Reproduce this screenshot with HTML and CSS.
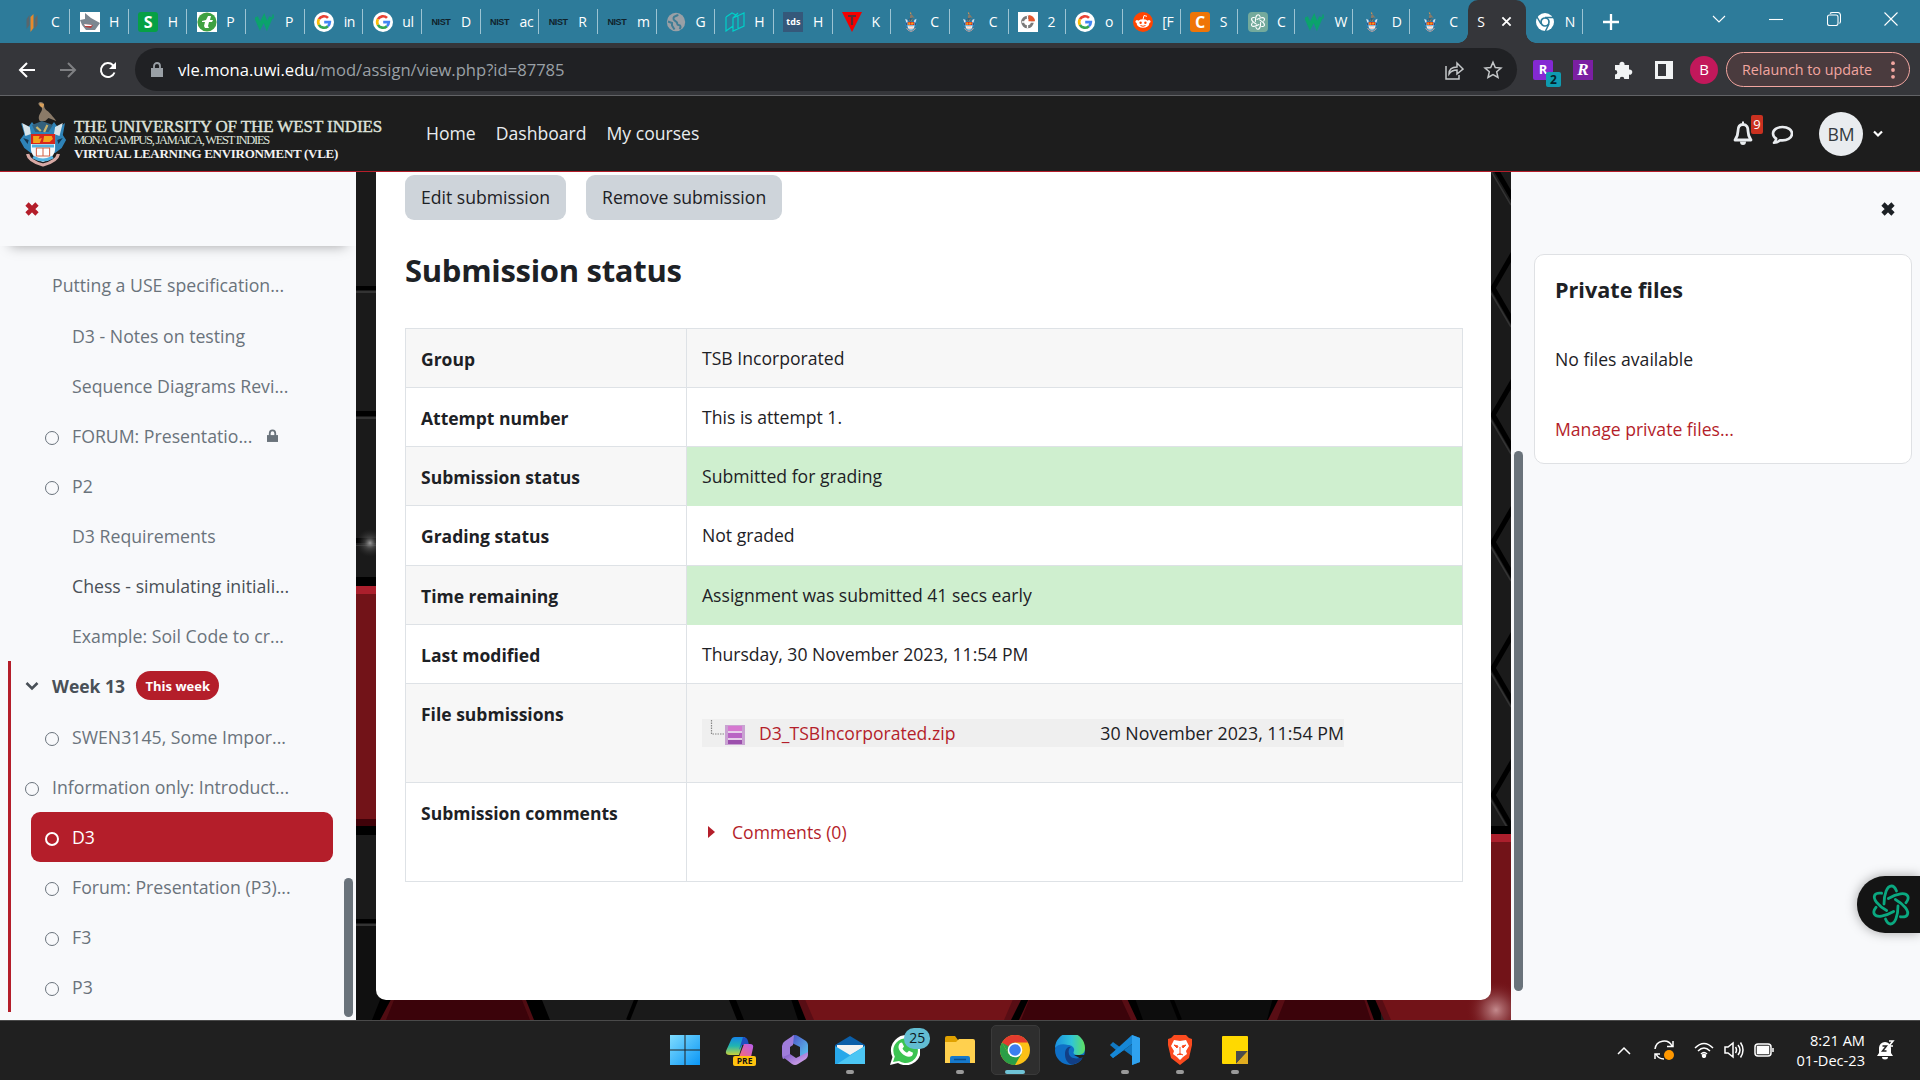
FILE: index.html
```html
<!DOCTYPE html>
<html lang="en">
<head>
<meta charset="utf-8">
<title>D3: Submission status</title>
<link rel="stylesheet" href="styles.css">
</head>
<body>
<svg class="defs" aria-hidden="true">
  <symbol id="google" viewBox="0 0 20 20"><circle cx="10" cy="10" r="10" fill="#fff"/><g fill="none" stroke-width="2.7"><path d="M14 5.9A5.8 5.8 0 0 0 4.9 7.2" stroke="#ea4335"/><path d="M4.9 7.2a5.8 5.8 0 0 0 0 5.6" stroke="#fbbc05"/><path d="M4.9 12.8a5.8 5.8 0 0 0 9 1.4" stroke="#34a853"/><path d="M13.9 14.2A5.8 5.8 0 0 0 15.8 10.2H10.2" stroke="#4285f4"/></g></symbol>
  <symbol id="crest" viewBox="0 0 44 66"><path d="M19 20c-3-6 3-9 2-13-1-3-4-3-3-5s5-1 5 2c0 5 3 5 6 9 2 3 5 6 5 7l-7-3-3 3z" fill="#8a7a68"/><path d="M19 2l4 1-1 4-3-2z" fill="#d9a05a"/><path d="M2 22l6 5 4-6 4 6 6-4 6 4 4-6 4 6 6-5-2 12 3 5-4 8-6 5H11l-6-5-4-8 4-6z" fill="#2e83b8"/><path d="M3 22l7 4 1 7-5 2zM40 22l-7 4-1 7 5 2z" fill="#d7e4ea"/><path d="M4 37l5 2-1 4zM40 37l-5 2 1 4z" fill="#16364f"/><path d="M12 24l9-4 10 4-4 7H15z" fill="#34617c"/><path d="M16 26l4 4M26 24l-3 7" stroke="#c8b36c" stroke-width="2"/><path d="M11 33h22v15c0 6-5 11-11 13-6-2-11-7-11-13z" fill="#f4f8fa"/><path d="M11 33h22v10H11z" fill="#d8261c"/><path d="M13 35h6l-1 3 3-1-2 5h-6zM23 35h7l1 3-3 3h-6z" fill="#f4a51c"/><path d="M12 45h20M13 56q9 6 18 0" stroke="#53b1df" stroke-width="3" fill="none"/><path d="M16 47h12v8H16z" fill="#fff" stroke="#d66a4e"/><path d="M22 47v8" stroke="#d66a4e"/><path d="M8 53c1 6 7 9 14 11 7-2 13-5 14-11" fill="none" stroke="#d8a9a4" stroke-width="3"/></symbol>
  <symbol id="wmark" viewBox="0 0 20 20"><path d="M1 5l4 9 4-8 3 8 4-9" fill="none" stroke="#0ba36c" stroke-width="4"/><path d="M18 2.500v4" stroke="#0ba36c" stroke-width="1.6"/></symbol>
  <symbol id="knot" viewBox="0 0 40 42"><g fill="none" stroke="currentColor" stroke-width="2.8" stroke-linecap="round"><path d="M13 20C13 10 16 2 20.5 2c2 0 3.8 2 5 5"/><path d="M13 20C13 10 16 2 20.5 2c2 0 3.8 2 5 5" transform="rotate(60 20 21)"/><path d="M13 20C13 10 16 2 20.5 2c2 0 3.8 2 5 5" transform="rotate(120 20 21)"/><path d="M13 20C13 10 16 2 20.5 2c2 0 3.8 2 5 5" transform="rotate(180 20 21)"/><path d="M13 20C13 10 16 2 20.5 2c2 0 3.8 2 5 5" transform="rotate(240 20 21)"/><path d="M13 20C13 10 16 2 20.5 2c2 0 3.8 2 5 5" transform="rotate(300 20 21)"/></g></symbol>
  <symbol id="cross" viewBox="0 0 14 14"><path d="M2 2l10 10M12 2L2 12" stroke="currentColor" stroke-width="4.6"/></symbol>
</svg>

<div class="tabs">
  <div class="tab first"><svg class="fav" viewBox="0 0 20 20"><path d="M4.500 7l3-4v10l-3 4z" fill="#59666c"/><path d="M8.500 5l3-3v14l-3 4z" fill="#e8892b"/><path d="M12.500 7l3-4v10l-3 4z" fill="#6b6660"/></svg><span>C</span></div>
  <div class="tab"><svg class="fav" viewBox="0 0 20 20"><path d="M0 0h20v20H0z" fill="#fff"/><path d="M0 8l5-1 0-6 6 5 9 5-5 7-9 0-4-5z" fill="#7c8791"/><path d="M4 12l9 1-2 3-6-1z" fill="#b8413f"/><path d="M4 12l8 1-1 1-6 0z" fill="#fff"/></svg><span>H</span></div>
  <div class="tab"><i class="fav sq green">S</i><span>H</span></div>
  <div class="tab"><svg class="fav" viewBox="0 0 20 20"><path d="M0 0h20v20H0z" fill="#fff"/><circle cx="10" cy="10" r="9.6" fill="#3fa142"/><path d="M5 9l4-1 2-4h3l-1 4h3l-1 2h-3l-1 4 1 2h-4l-1-2 1-4H5z" fill="#fff"/></svg><span>P</span></div>
  <div class="tab"><svg class="fav"><use href="#wmark"/></svg><span>P</span></div>
  <div class="tab"><svg class="fav"><use href="#google"/></svg><span>in</span></div>
  <div class="tab"><svg class="fav"><use href="#google"/></svg><span>ul</span></div>
  <div class="tab"><i class="fav nist">NIST</i><span>D</span></div>
  <div class="tab"><i class="fav nist">NIST</i><span>ac</span></div>
  <div class="tab"><i class="fav nist">NIST</i><span>R</span></div>
  <div class="tab"><i class="fav nist">NIST</i><span>m</span></div>
  <div class="tab"><svg class="fav" viewBox="0 0 20 20"><circle cx="10" cy="10" r="9.2" fill="#9aa0a6"/><path d="M12 2.500c-1 2-4 1-4.500 3.500S9 8.500 10.500 10s0 3 2 3 3 2 1 4M2 9.500l4 1.500v2.500l2.500 4" fill="none" stroke="#3f7c94" stroke-width="2"/></svg><span>G</span></div>
  <div class="tab"><svg class="fav" viewBox="0 0 20 20" fill="none" stroke="#00cfc8" stroke-width="1.2"><path d="M1 5l6-4 4 2M1 5v14l7-5M8 6l11-5v13L8 19zM8 6l5-5M13 3v14"/></svg><span>H</span></div>
  <div class="tab"><i class="fav tds">tds</i><span>H</span></div>
  <div class="tab"><svg class="fav" viewBox="0 0 20 20"><path d="M0 0h20L10 20z" fill="#f40000"/><path d="M6 4h8M10 4v9" stroke="#5c2a33" stroke-width="2.2"/></svg><span>K</span></div>
  <div class="tab"><svg class="fav"><use href="#crest"/></svg><span>C</span></div>
  <div class="tab"><svg class="fav"><use href="#crest"/></svg><span>C</span></div>
  <div class="tab slim"><svg class="fav" viewBox="0 0 20 20"><path d="M0 0h20v20H0z" fill="#fff"/><circle cx="9.500" cy="10" r="4.800" fill="none" stroke="#7a7a7a" stroke-width="3"/><path d="M9.500 4v12M4 10h12" stroke="#fff" stroke-width="1.300"/><path d="M10.500 3A6.500 6.500 0 0 1 17 9.200h-6.500z" fill="#e4572e"/></svg><span>2</span></div>
  <div class="tab slim"><svg class="fav"><use href="#google"/></svg><span>o</span></div>
  <div class="tab slim"><svg class="fav" viewBox="0 0 20 20"><circle cx="10" cy="10" r="10" fill="#ff4500"/><ellipse cx="10" cy="11.500" rx="6.300" ry="4.300" fill="#fff"/><circle cx="4" cy="9.500" r="1.500" fill="#fff"/><circle cx="16" cy="9.500" r="1.500" fill="#fff"/><circle cx="7.600" cy="10.800" r="1.200" fill="#ff4500"/><circle cx="12.400" cy="10.800" r="1.200" fill="#ff4500"/><path d="M7.500 13.500q2.500 1.600 5 0" stroke="#ff4500" fill="none"/><path d="M10 7.500l1-4 3 .8" stroke="#fff" fill="none"/></svg><span>[F</span></div>
  <div class="tab slim"><i class="fav sq orange">C</i><span>S</span></div>
  <div class="tab slim"><svg class="fav gpt"><use href="#knot"/></svg><span>C</span></div>
  <div class="tab slim"><svg class="fav"><use href="#wmark"/></svg><span>W</span></div>
  <div class="tab slim"><svg class="fav"><use href="#crest"/></svg><span>D</span></div>
  <div class="tab slim last"><svg class="fav"><use href="#crest"/></svg><span>C</span></div>
  <div class="tab active"><span>S</span><svg class="tabx" viewBox="0 0 12 12"><path d="M1.500 1.500l9 9M10.500 1.500l-9 9" stroke="#fff" stroke-width="2"/></svg></div>
  <div class="tab slim"><svg class="fav" viewBox="0 0 20 20"><circle cx="10" cy="10" r="9" fill="#fff"/><circle cx="10" cy="10" r="4" fill="#fff" stroke="#2d7b9a" stroke-width="1.700"/><path d="M10 5.500h9M6 12L2 5M14 12l-4 8" stroke="#2d7b9a" stroke-width="1.500"/></svg><span>N</span></div>
  <svg class="plus" viewBox="0 0 16 16"><path d="M8 0v16M0 8h16" stroke="#fff" stroke-width="2.300"/></svg>
  <div class="winctl">
    <svg viewBox="0 0 14 14"><path d="M1 4l6 6 6-6"/></svg>
    <svg viewBox="0 0 14 14"><path d="M0 7.500h14"/></svg>
    <svg viewBox="0 0 14 14"><rect x=".5" y="3" width="10.500" height="10.500" rx="2"/><path d="M3 1.500q1-1 3-1h4.500q3 0 3 3V9q0 2-1 2.500"/></svg>
    <svg viewBox="0 0 14 14"><path d="M.5 .5l13 13M13.500 .5l-13 13"/></svg>
  </div>
</div>

<div class="toolbar">
  <svg class="nav" viewBox="0 0 18 18"><path d="M17 9H2M9 2L2 9l7 7" stroke="#fff"/></svg>
  <svg class="nav" viewBox="0 0 18 18"><path d="M1 9h15M9 2l7 7-7 7" stroke="#7f8083"/></svg>
  <svg class="nav" viewBox="0 0 18 18"><path d="M15.500 11.500A7 7 0 1 1 14 4.200l1.500 1.600" stroke="#fff"/><path d="M17 1v7h-7z" fill="#fff" stroke="none"/></svg>
  <div class="omni">
    <svg class="lock" viewBox="0 0 12 16"><path d="M0 6h12v9H0z" fill="#9aa0a6"/><path d="M3 7V4a3 3 0 0 1 6 0v3" fill="none" stroke="#9aa0a6" stroke-width="1.800"/></svg>
    <div class="url"><b>vle.mona.uwi.edu</b>/mod/assign/view.php?id=87785</div>
    <svg class="oi" viewBox="0 0 20 20"><path d="M2 6v13h13v-4M5 14c0-5 3-7 8-7V3l6 6-6 5v-4c-4 0-6 1-8 4z"/></svg>
    <svg class="oi" viewBox="0 0 20 20"><path d="M10 2.200l2.300 5.300 5.700.5-4.300 3.800 1.300 5.700-5-3-5 3 1.300-5.700L2 8l5.700-.5z"/></svg>
  </div>
  <div class="exts">
    <div class="ext purple">R<i class="two">2</i></div>
    <div class="ext script">R</div>
    <svg class="puz" viewBox="0 0 20 20"><path d="M2 5h4.500a2.600 2.600 0 1 1 5 0H16v4.600a2.600 2.600 0 1 1 0 5V19h-4.700a2.300 2.300 0 0 0-4.600 0H2v-4.500a2.300 2.300 0 0 0 0-4.600z" fill="#f1f3f4"/></svg>
    <i class="side"></i>
    <i class="prof">B</i>
  </div>
  <div class="relaunch"><span>Relaunch to update</span><svg viewBox="0 0 4 18"><circle cx="2" cy="2.200" r="1.900"/><circle cx="2" cy="9" r="1.900"/><circle cx="2" cy="15.800" r="1.900"/></svg></div>
</div>

<header class="site">
  <svg class="logo"><use href="#crest"/></svg>
  <div class="brand"><div class="l1">THE UNIVERSITY OF THE WEST INDIES</div><div class="l2">MONA CAMPUS, JAMAICA, WEST INDIES</div><div class="l3">VIRTUAL LEARNING ENVIRONMENT (VLE)</div></div>
  <nav><a>Home</a><a>Dashboard</a><a>My courses</a></nav>
  <div class="user">
    <div class="bell"><svg viewBox="0 0 20 24"><path d="M10 3c-4 0-5 3-5 6.500C5 14 3.500 16 2 18.500h16C16.500 16 15 14 15 9.500 15 6 14 3 10 3z" fill="none" stroke="#e9ecef" stroke-width="2.800" stroke-linejoin="round"/><path d="M7 20h6a3 3.500 0 0 1-6 0zM9 0h2v3H9z" fill="#e9ecef"/></svg><i>9</i></div>
    <svg class="chat" viewBox="0 0 22 20"><path d="M11.500 2C6 2 2 4.800 2 8.500c0 2.200 1.300 4 3.200 5.200C5 15.500 4 16.800 3 17.800c2.500 0 4.500-1 6-2.600C16 16 21 13 21 8.500 21 4.800 17 2 11.500 2z" fill="none" stroke="#e9ecef" stroke-width="2.600" stroke-linejoin="round"/></svg>
    <i class="ava">BM</i>
    <svg class="chev" viewBox="0 0 10 8"><path d="M1 1.500l4 4 4-4" fill="none" stroke="#fff" stroke-width="2.200"/></svg>
  </div>
</header>

<div class="body">
  <aside class="left">
    <div class="dhead"><svg><use href="#cross"/></svg></div>
    <div class="idx">
      <div class="it gap"><i class="no"></i>Putting a USE specification...</div>
      <div class="it sub"><i class="no"></i>D3 - Notes on testing</div>
      <div class="it sub"><i class="no"></i>Sequence Diagrams Revi...</div>
      <div class="it sub"><i></i>FORUM: Presentatio...<svg class="lk" viewBox="0 0 12 16"><path d="M0 7h12v7.500H0z"/><path d="M3 8V5a3 3.200 0 0 1 6 0v3" fill="none" stroke="#6a737b" stroke-width="2"/></svg></div>
      <div class="it sub"><i></i>P2</div>
      <div class="it sub"><i class="no"></i>D3 Requirements</div>
      <div class="it sub dark"><i class="no"></i>Chess - simulating initiali...</div>
      <div class="it sub"><i class="no"></i>Example: Soil Code to cr...</div>
      <div class="cur">
        <div class="it week gap"><svg viewBox="0 0 14 10"><path d="M1.500 2l5.500 5.500L12.500 2" fill="none" stroke="#495057" stroke-width="2.600"/></svg>Week 13<em>This week</em></div>
        <div class="it sub"><i></i>SWEN3145, Some Impor...</div>
        <div class="it"><i></i>Information only: Introduct...</div>
        <div class="it sub on"><i></i>D3</div>
        <div class="it sub"><i></i>Forum: Presentation (P3)...</div>
        <div class="it sub"><i></i>F3</div>
        <div class="it sub"><i></i>P3</div>
      </div>
    </div>
    <div class="sb sbl"></div>
  </aside>

  <main>
    <svg class="wall" viewBox="356 172 1155 848">
      <defs>
        <radialGradient id="g1"><stop offset="0" stop-color="#999"/><stop offset=".4" stop-color="#666" stop-opacity=".5"/><stop offset="1" stop-color="#333" stop-opacity="0"/></radialGradient>
        <radialGradient id="g2"><stop offset="0" stop-color="#c48a8d"/><stop offset=".4" stop-color="#a05a5e" stop-opacity=".7"/><stop offset="1" stop-color="#721318" stop-opacity="0"/></radialGradient>
      </defs>
      <path d="M356 172h1155v848H356z" fill="#1a1a1a"/>
      <path d="M356 286h20v4h-20zM356 411h20v5h-20zM356 538h20v5h-20zM356 577h20v9h-20zM356 826h20v9h-20zM356 919h20v4h-20z" fill="#000"/>
      <path d="M356 291h20v2h-20zM356 417h20v2h-20zM356 545h20v1h-20zM356 924h20v2h-20z" fill="#333"/>
      <path d="M356 586h20v8h-20z" fill="#ab1f2c"/><path d="M356 594h20v225h-20z" fill="#721318"/><path d="M356 819h20v7h-20z" fill="#400209"/>
      <circle cx="370" cy="543" r="14" fill="url(#g1)"/>
      <g fill="none" stroke="#000" stroke-width="5"><path d="M1495 168l20 34M1515 250l-22 38 22 38M1515 377l-22 38 22 38M1515 504l-22 38 22 38M1515 630l-22 38 22 38M1515 757l-22 38 22 38"/></g>
      <g fill="none" stroke="#333" stroke-width="1.500"><path d="M1491 171l20 34M1491 293l20 34M1491 420l20 34M1491 547l20 34M1491 673l20 34M1491 800l20 34"/></g>
      <path d="M1491 826h20v8h-20z" fill="#000"/><path d="M1491 834h20v8h-20z" fill="#ab1f2c"/><path d="M1491 842h20v178h-20z" fill="#721318"/>
      <path d="M356 990h1025v30H356z" fill="#000"/>
      <path d="M356 926h20v64h8l-12 30h-16z" fill="#101010"/>
      <path d="M396 990h126l12 30H380z" fill="#500c12"/><path d="M398 990h120l12 30H386z" fill="#3b030a"/>
      <path d="M538 990h187l12 30H550z" fill="#1a1a1a"/><path d="M640 990l-12 30" stroke="#000" stroke-width="4"/>
      <path d="M732 990h56l10 30H744z" fill="#111"/>
      <path d="M794 990h232l-15 30H806z" fill="#580d14"/><path d="M801 990h216l-13 30H814z" fill="#721318"/>
      <path d="M1033 990h90l14 30H1019z" fill="#580d14"/><path d="M1033 990h84l14 30H1021z" fill="#3b030a"/>
      <path d="M1132 990h143l-8 30H1143z" fill="#0d0d0d"/><path d="M1168 990l12 30" stroke="#000" stroke-width="4"/>
      <path d="M1283 990h80l11 30H1268z" fill="#580d14"/><path d="M1289 990h72l10 30h-94z" fill="#3b030a"/>
      <path d="M1371 990h120v30h-107z" fill="#580d14"/><path d="M1378 990h113v30h-100z" fill="#721318"/>
      <circle cx="1496" cy="1010" r="30" fill="url(#g2)"/>
    </svg>
    <div class="card">
      <div class="btns"><a>Edit submission</a><a>Remove submission</a></div>
      <h3>Submission status</h3>
      <div class="tbl">
        <div class="tr"><b>Group</b><div>TSB Incorporated</div></div>
        <div class="tr"><b>Attempt number</b><div>This is attempt 1.</div></div>
        <div class="tr ok"><b>Submission status</b><div>Submitted for grading</div></div>
        <div class="tr t60"><b>Grading status</b><div>Not graded</div></div>
        <div class="tr ok"><b>Time remaining</b><div>Assignment was submitted 41 secs early</div></div>
        <div class="tr"><b>Last modified</b><div>Thursday, 30 November 2023, 11:54 PM</div></div>
        <div class="tr tall"><b>File submissions</b><div class="fcell"><div class="file">
          <svg viewBox="0 0 38 28"><path d="M9.500 1v14H23" fill="none" stroke="#888" stroke-width="1.200" stroke-dasharray="1.500 1"/></svg>
          <i class="zip"></i><a>D3_TSBIncorporated.zip</a><span>30 November 2023, 11:54 PM</span></div></div></div>
        <div class="tr tall"><b>Submission comments</b><div class="ccell"><svg viewBox="0 0 7 12"><path d="M0 0l7 6-7 6z" fill="#b41e2a"/></svg><a>Comments (0)</a></div></div>
      </div>
    </div>
  </main>

  <aside class="right">
    <div class="rhead"><svg><use href="#cross"/></svg></div>
    <section><h5>Private files</h5><p>No files available</p><a>Manage private files...</a></section>
    <div class="sb sbr"></div>
    <div class="float"><svg><use href="#knot"/></svg></div>
  </aside>
</div>

<footer class="task">
  <div class="apps">
    <div class="app"><svg viewBox="0 0 30 30"><defs><linearGradient id="w" x1="0" y1="0" x2="1" y2="1"><stop offset="0" stop-color="#7fdcff"/><stop offset="1" stop-color="#0a96f5"/></linearGradient></defs><path d="M0 0h14.500v14.500H0zM15.500 0H30v14.500H15.500zM0 15.500h14.500V30H0zM15.500 15.500H30V30H15.500z" fill="url(#w)"/></svg></div>
    <div class="app"><svg viewBox="0 0 30 30"><defs><linearGradient id="c1" x1="0" y1="0" x2="0" y2="1"><stop offset="0" stop-color="#1684e8"/><stop offset=".5" stop-color="#20b5b0"/><stop offset="1" stop-color="#c9d23a"/></linearGradient><linearGradient id="c2" x1="1" y1="0" x2="0" y2="1"><stop offset="0" stop-color="#b65cf0"/><stop offset="1" stop-color="#fa6b73"/></linearGradient></defs><path d="M6 5q1-3 4-3h10l-6 18H5q-5 0-4-4z" fill="url(#c1)"/><path d="M18 2q4 0 5 4l1 4h-7l-3 5z" fill="#1d4fc0"/><path d="M19 9h6q4 0 3 4l-2 9H14z" fill="url(#c2)"/></svg><i class="pre">PRE</i></div>
    <div class="app"><svg viewBox="0 0 30 30"><defs><linearGradient id="o1" x1="0" y1="0" x2="1" y2="1"><stop offset="0" stop-color="#4c54c8"/><stop offset="1" stop-color="#5cc8f0"/></linearGradient><linearGradient id="o2" x1="0" y1="0" x2="1" y2="1"><stop offset="0" stop-color="#7253c7"/><stop offset="1" stop-color="#e3b1ee"/></linearGradient></defs><path d="M12 1q3-2 6 0l8 5q2 2 2 4v9l-8 3V12l-8-4z" fill="url(#o1)"/><path d="M14 0l-1 10-3 2v9l-7 3q-1-2-1-4v-9q0-3 3-5z" fill="#9f7cdb"/><path d="M3 22l7-3 6 4 12-6v3q0 2-2 4l-8 5q-3 2-6 0z" fill="url(#o2)"/></svg></div>
    <div class="app run"><svg viewBox="0 0 30 30"><path d="M0 10L15 1l15 9v6H0z" fill="#0b5fa9"/><path d="M2 10h26v8L15 22 2 17z" fill="#f2f2f2"/><path d="M0 11l15 9 15-9v18H0z" fill="#28a8ea"/><path d="M30 11L2 29h28z" fill="#4cc6f4"/></svg></div>
    <div class="app"><svg viewBox="0 0 30 30"><path d="M0 30l2.500-8A15 15 0 1 1 8 28z" fill="#fff"/><path d="M3 27l1.800-5.500A12.300 12.300 0 1 1 9 26z" fill="#3cc452"/><path d="M10 8l2-.5 2 4-1.500 2c1 2 2.500 3.500 4.500 4.300l2-2 4 2c0 3-2 4-4 4-5-.5-10-5-10.500-9.500 0-2 .5-3 1.500-4.300z" fill="#fff"/></svg><i class="cnt">25</i></div>
    <div class="app run"><svg viewBox="0 0 30 30"><path d="M0 3q0-2 2-2h8l3 4v6H0z" fill="#e0a100"/><path d="M0 7h11l3-3h14q2 0 2 2v22H0z" fill="#ffd04e"/><path d="M5 28v-5q0-2 2-2h16q2 0 2 2v5z" fill="#1679cc"/><path d="M9 24.500h12" stroke="#0a4d8c" stroke-width="1.500"/></svg></div>
    <div class="app cur2"><svg viewBox="0 0 30 30"><circle cx="15" cy="15" r="15" fill="#fbc116"/><path d="M2 7.500A15 15 0 0 0 15 30l6.500-11.300H8.500z" fill="#2a9e47"/><path d="M2 7.500l6.500 11.200L15 7.500z" fill="#2a9e47"/><path d="M2 7.500A15 15 0 0 1 28 7.500H15a7.500 7.500 0 0 0-6.500 3.700z" fill="#e33b2e"/><circle cx="15" cy="15" r="7.300" fill="#fff"/><circle cx="15" cy="15" r="5.800" fill="#3c7ef0"/></svg></div>
    <div class="app"><svg viewBox="0 0 30 30"><defs><linearGradient id="e1"><stop offset="0" stop-color="#1a8fe0"/><stop offset=".55" stop-color="#30c5d8"/><stop offset="1" stop-color="#5fe060"/></linearGradient></defs><circle cx="15" cy="15" r="15" fill="#0f6fc6"/><path d="M19 20h11v6z" fill="#202020"/><path d="M0 13A15 15 0 0 1 30 13c0 5-3 7-7 7-5 0-5-2-4-4 1-3-2-6-6-6C7 8 2 10 0 13z" fill="url(#e1)"/><path d="M10 19c0-5 3-8 6-7-2 1-3 4-2 7 1 4 7 6 14 3-3 6-9 8-13 7-3-2-5-5-5-10z" fill="#123f86"/></svg></div>
    <div class="app run"><svg viewBox="0 0 30 30"><path d="M22 0l8 3v24l-8 3V9L3 23l-3-3 6-5-6-5 3-3 19 14z" fill="#1279c2"/><path d="M22 30L30 27V3l-8-3z" fill="#2fa2ef"/><path d="M22 0L0 20l3 3L22 9z" fill="#1687d6"/></svg></div>
    <div class="app run"><svg viewBox="0 0 30 30"><path d="M9 0h12l3 3 3 1v6l-3 13-9 7-9-7L3 10V4l3-1z" fill="#fb4b1f"/><path d="M9 5l6 1 6-1 3 6-3 5 1 3-4 3-3 3-3-3-4-3 1-3-3-5z" fill="#fff"/><path d="M9 10l4 1-1 2zM21 10l-4 1 1 2zM15 12v6M12 20l3-1.500 3 1.500" fill="#fb4b1f" stroke="#fb4b1f"/></svg></div>
    <div class="app run"><svg viewBox="0 0 30 30"><path d="M2 2q0-1 1-1h24q1 0 1 1v27H3q-1 0-1-1z" fill="#ffd900"/><path d="M16 16h12L16 29z" fill="#4b4b4b"/><path d="M28 16v13H16z" fill="#e0ac20"/></svg></div>
  </div>
  <div class="tray">
    <svg viewBox="0 0 14 9" class="up"><path d="M1 8l6-6 6 6"/></svg>
    <svg viewBox="0 0 20 20" class="sync"><path d="M1 9A9 9 0 0 1 18 6M19 1v5.500h-6M1 19v-5h5M2 14c2 4 5 5 8 5"/><circle cx="15" cy="15" r="5" fill="#ff9800" stroke="none"/></svg>
    <svg viewBox="0 0 20 16" class="wifi"><path d="M1 6q9-9 18 0M4 9q6-6 12 0M7 12q3-3 6 0"/><circle cx="10" cy="13.800" r="1.500" fill="#fff"/></svg>
    <svg viewBox="0 0 20 18" class="vol"><path d="M1 6h3l5-4v14l-5-4H1zM11.500 6q2 3 0 6M14 4q4 5 0 10M16.500 1.500q5 7.500 0 15"/></svg>
    <svg viewBox="0 0 20 14" class="bat"><rect x="1" y="1" width="16" height="12" rx="3"/><rect x="3.500" y="3.500" width="11" height="7" fill="#fff"/><path d="M19 5v4"/></svg>
    <div class="clock">8:21 AM<br>01-Dec-23</div>
    <svg viewBox="0 0 18 20" class="zz"><path d="M2 8a6 6 0 0 1 12 0v5l2 3H0l2-3zM5 17h6a3 2.500 0 0 1-6 0z" fill="#fff" stroke="none"/><path d="M5.500 6h4l-4 5h4" stroke="#222" stroke-width="1.500"/><path d="M12 1h4l-4 5h4" stroke="#fff" stroke-width="1.600"/></svg>
  </div>
</footer>
</body>
</html>
```
FILE: styles.css
```css
* { box-sizing: border-box; }
html, body { margin: 0; width: 1920px; height: 1080px; overflow: hidden; }
body { font-family: "Open Sans", "Noto Sans", sans-serif; font-size: 17.6px; color: #1d2125; display: flex; flex-direction: column; }
i, em { font-style: normal; }
svg { flex: none; display: block; }
.defs { position: absolute; width: 0; height: 0; }

/* browser tabs */
.tabs { flex: none; height: 43px; background: #2d7b9a; display: flex; align-items: center; padding-left: 12px; }
.tab { width: 58.67px; height: 25px; flex: none; border-right: 1px solid #9cc4d3; display: flex; align-items: center; padding-left: 9.5px; color: #fff; font-size: 14px; }
.tab.first { width: 58px; }
.tab.slim { width: 57.4px; }
.tab.last { border-right: 0; }
.tab span { margin-left: 9.5px; width: 16px; white-space: nowrap; letter-spacing: -.4px; line-height: 20px; }
.fav { width: 20px; height: 20px; flex: none; }
.fav.sq { border-radius: 3px; font-weight: 700; font-size: 16px; line-height: 20px; text-align: center; color: #fff; }
.green { background: #07a045; }
.orange { background: #ef7507; }
.nist { font: 700 9px/20px "Liberation Sans", sans-serif; letter-spacing: -.4px; color: #10222b; }
.tds { background: #35587a; color: #fff; font-size: 9px; font-weight: 700; line-height: 19px; text-align: center; }
.gpt { background: #74aa9c; border-radius: 4px; color: #fff; padding: 2px; }
.tab.active { width: 58px; height: 43px; background: #35363a; border: 0; border-radius: 10px 10px 0 0; position: relative; }
.tab.active::before, .tab.active::after { content: ""; position: absolute; bottom: 0; width: 10px; height: 10px; }
.tab.active::before { left: -10px; background: radial-gradient(circle at 0 0, #2d7b9a 9.5px, #35363a 10px); }
.tab.active::after { right: -10px; background: radial-gradient(circle at 100% 0, #2d7b9a 9.5px, #35363a 10px); }
.tab.active span { margin-left: 0; width: 11px; }
.tabx { width: 11px; height: 11px; margin-left: 13px; }
.plus { width: 16px; height: 16px; margin-left: 20px; }
.winctl { margin-left: auto; display: flex; gap: 43.3px; padding: 0 22px 6px 0; }
.winctl svg { width: 14px; height: 14px; fill: none; stroke: #fff; stroke-width: 1.1; }

/* toolbar */
.toolbar { flex: none; height: 53px; background: #35363a; border-bottom: 1px solid #626366; display: flex; align-items: center; padding: 1px 10px 0 18px; }
.nav { width: 18px; height: 18px; margin-right: 22.5px; fill: none; stroke-width: 2; }
.nav + .nav + .nav { margin-right: 18px; }
.omni { width: 1382px; height: 43px; border-radius: 22px; background: #202124; display: flex; align-items: center; padding: 0 14px 0 16px; }
.lock { width: 12px; height: 16px; }
.url { margin-left: 15px; flex: 1; font-size: 16.6px; line-height: 24px; padding-top: 1px; color: #9aa0a6; }
.url b { font-weight: 400; color: #fff; }
.oi { width: 20px; height: 20px; margin-left: 19px; fill: none; stroke: #c4c7c9; stroke-width: 1.5; }
.exts { display: flex; align-items: center; margin-left: 16px; }
.ext { width: 20px; height: 20px; position: relative; color: #fff; font-size: 13px; line-height: 19px; text-align: center; font-weight: 700; }
.purple { background: #8429d3; border-radius: 2px; }
.script { background: #7b1fa2; margin: 0 20px; font-family: "Liberation Serif", serif; font-style: italic; font-size: 17px; }
.two { position: absolute; left: 13px; top: 12px; width: 15px; height: 15px; background: #0f9bb0; color: #06222a; font-size: 12px; line-height: 15px; border-radius: 2px; }
.puz { width: 20px; height: 20px; }
.side { width: 18px; height: 18px; border: 3px solid #f1f3f4; border-right-width: 7px; margin: 0 17px 0 22px; }
.prof { width: 28px; height: 28px; border-radius: 50%; background: #c2185b; color: #fff; font-size: 15px; line-height: 27px; text-align: center; }
.relaunch { margin-left: auto; width: 184px; height: 35px; border: 1.5px solid #f2a6a0; border-radius: 18px; background: #4a3b3e; color: #f2a6a0; display: flex; align-items: center; justify-content: space-between; padding: 0 14px 0 15px; font-size: 14.3px; white-space: nowrap; }
.relaunch svg { width: 4px; height: 18px; fill: #f2a6a0; }

/* site header */
.site { flex: none; height: 76px; background: #1d1d1d; border-bottom: 1px solid #b41e2a; display: flex; align-items: center; }
.logo { width: 44px; height: 66px; margin-left: 21px; transform: scaleX(1.1); }
.brand { margin-left: 9px; width: 352px; color: #dfe3dc; font-family: "Liberation Serif", serif; white-space: nowrap; padding-top: 15px; }
.l1 { font-size: 17px; line-height: 16px; letter-spacing: -.1px; -webkit-text-stroke: .4px; }
.l2 { font-size: 12.5px; line-height: 10px; letter-spacing: -1.3px; }
.l3 { font-size: 13px; line-height: 18px; font-weight: 700; letter-spacing: -.3px; color: #f3f3f3; }
nav { display: flex; gap: 20px; color: #e9ecef; padding-bottom: 2px; }
.user { margin-left: auto; display: flex; align-items: center; padding-right: 37px; }
.bell { position: relative; }
.bell svg { width: 20px; height: 25px; }
.bell i { position: absolute; left: 18px; top: -6px; width: 12px; height: 19px; background: #ca3120; color: #fff; font-size: 13px; line-height: 18px; text-align: center; border-radius: 2px; }
.chat { width: 22px; height: 20px; margin: 3px 0 0 18px; }
.ava { width: 44px; height: 44px; border-radius: 50%; background: #e9ecef; color: #343a40; line-height: 44px; text-align: center; margin-left: 26px; }
.chev { width: 10px; height: 8px; margin-left: 10px; }

.body { flex: none; height: 848px; display: flex; }
aside { background: #f8f9fb; position: relative; }
.sb { position: absolute; width: 9px; border-radius: 5px; background: #6a737b; }

/* course index */
.left { width: 356px; }
.dhead { height: 74px; display: flex; align-items: center; padding: 0 0 0 25px; color: #b41e2a; background: #f8f9fb; box-shadow: 0 10px 12px -10px rgba(0, 0, 0, .35); }
.dhead svg, .rhead svg { width: 14px; height: 14px; }
.idx { padding-top: 14px; }
.it { height: 50px; display: flex; align-items: center; color: #6a737b; padding: 0 0 1px 25px; white-space: nowrap; font-size: 17.7px; }
.it > i { width: 14px; height: 14px; flex: none; border: 1.5px solid #6a737b; border-radius: 50%; margin: 4px 13px 0 0; }
.it > i.no { visibility: hidden; }
.it.sub { padding-left: 45px; }
.it.gap { margin-bottom: 1px; }
.it.dark { color: #495057; }
.lk { width: 11px; height: 16px; margin-left: 15px; fill: #6a737b; }
.cur { position: relative; }
.cur::before { content: ""; position: absolute; left: 8px; top: 0; bottom: 0; width: 3px; background: #b41e2a; }
.it.week { font-weight: 700; color: #495057; font-size: 17.5px; }
.week svg { width: 14px; height: 10px; margin-right: 13px; }
.week em { margin-left: 11px; height: 29px; line-height: 30px; padding: 0 9.5px; border-radius: 15px; background: #b41e2a; color: #fff; font-size: 13px; }
.it.on { margin: 0 23px 0 31px; padding-left: 14px; background: #b41e2a; border-radius: 9px; color: #fff; }
.it.on > i { border: 2px solid #fff; }
.sbl { left: 344px; top: 706px; height: 139px; }

/* assignment */
main { width: 1155px; position: relative; }
.wall { position: absolute; left: 0; top: 0; width: 1155px; height: 848px; }
.card { position: relative; margin: 0 20px; height: 828px; background: #fff; border-radius: 0 0 10px 10px; padding: 3px 28px 0 29px; }
.btns { display: flex; gap: 20px; }
.btns a { height: 45px; line-height: 45px; padding: 0 16px; background: #ced4da; border-radius: 9px; }
h3 { margin: 27px 0 35px; font-size: 31px; line-height: 46px; font-weight: 700; letter-spacing: -.3px; }
.tbl { border: 1px solid #dee2e6; width: 1058px; }
.tr { display: grid; grid-template-columns: 280px 1fr; height: 59px; border-bottom: 1px solid #dee2e6; line-height: 58px; }
.tr:nth-child(odd) { background: #f7f7f7; }
.tr > b { padding: 1px 0 0 15px; font-size: 17.5px; }
.tr > div { border-left: 1px solid #dee2e6; padding-left: 15px; }
.tr.ok > div { background: #cfefcf; }
.tr.t60 { height: 60px; }
.tr.tall { height: 99px; }
.tr.tall:last-child { border-bottom: 0; height: 98px; }
.fcell { padding-top: 35px; }
.file { width: 642px; height: 28px; background: #efefef; display: flex; align-items: center; line-height: 28px; }
.file svg { width: 38px; height: 28px; margin-right: -15px; }
.zip { width: 20px; height: 20px; margin: 3px 14px 0 0; border: 1px solid #c9a2d2; border-width: 1px 3px; background: linear-gradient(#d678d0 0 5px, #e6cfea 5px 7px, #b964c4 7px 12px, #e6cfea 12px 14px, #9c50ad 14px); z-index: 1; }
.file span { margin-left: auto; font-size: 17.8px; }
a { color: inherit; }
.file a, .ccell a, section a { color: #b41e2a; }
.ccell { display: flex; align-items: center; }
.ccell svg { width: 7px; height: 12px; margin: 0 17px 0 6px; }

/* blocks drawer */
.right { width: 409px; padding: 0 8px 0 23px; }
.rhead { height: 82px; display: flex; justify-content: flex-end; padding: 30px 17px 0 0; }
section { height: 210px; border: 1px solid #dfe1e4; border-radius: 10px; background: #fff; padding: 20px 20px; }
h5 { margin: 0; font-size: 21.6px; line-height: 30px; }
p { margin: 41px 0 44px; line-height: 26px; }
section a { line-height: 26px; display: block; }
.sbr { left: 3px; top: 279px; height: 540px; }
.float { position: absolute; right: 0; top: 704px; width: 63px; height: 57px; background: #141414; border-radius: 28px 0 0 28px; box-shadow: 0 0 12px rgba(0, 0, 0, .35); color: #0aa880; padding: 8px 0 0 14px; }
.float svg { width: 40px; height: 42px; }

/* taskbar */
.task { flex: none; height: 60px; background: #202020; border-top: 1px solid #4a4a4a; display: flex; align-items: center; padding-left: 657px; }
.apps { display: flex; padding-bottom: 1px; }
.app { width: 55.1px; height: 50px; display: flex; align-items: center; justify-content: center; position: relative; }
.app > svg { width: 30px; height: 30px; }
.run::after, .cur2::after { content: ""; position: absolute; bottom: 1px; width: 8px; height: 4px; border-radius: 2px; background: #9a9a9a; }
.cur2::after { width: 20px; background: #6fc3d6; }
.cur2::before { content: ""; position: absolute; inset: 0 3px; background: #2e2e2e; border: 1px solid #3a3a3a; border-radius: 5px; }
.cur2 svg { position: relative; }
.pre { position: absolute; left: 21px; top: 31px; width: 23px; height: 10px; background: #ffc20e; border-radius: 2px; color: #111; font-size: 8.5px; font-weight: 700; line-height: 10px; text-align: center; }
.cnt { position: absolute; left: 27px; top: 3px; width: 26px; height: 21px; border-radius: 10px; background: #62bdd2; color: #0b1a1e; font-size: 14px; line-height: 20px; text-align: center; }
.tray { margin-left: auto; display: flex; align-items: center; padding: 0 25px 1px 0; }
.tray svg { fill: none; stroke: #fff; stroke-width: 1.5; }
.up { width: 14px; height: 9px; margin-right: 23px; }
.sync { width: 20px; height: 20px; margin-right: 20px; }
.wifi { width: 20px; height: 16px; margin-right: 10px; }
.vol { width: 20px; height: 18px; margin-right: 10px; }
.bat { width: 20px; height: 14px; }
.clock { width: 91px; text-align: right; color: #fff; font-size: 14.6px; line-height: 20px; margin-right: 12px; }
.zz { width: 18px; height: 20px; }
```
